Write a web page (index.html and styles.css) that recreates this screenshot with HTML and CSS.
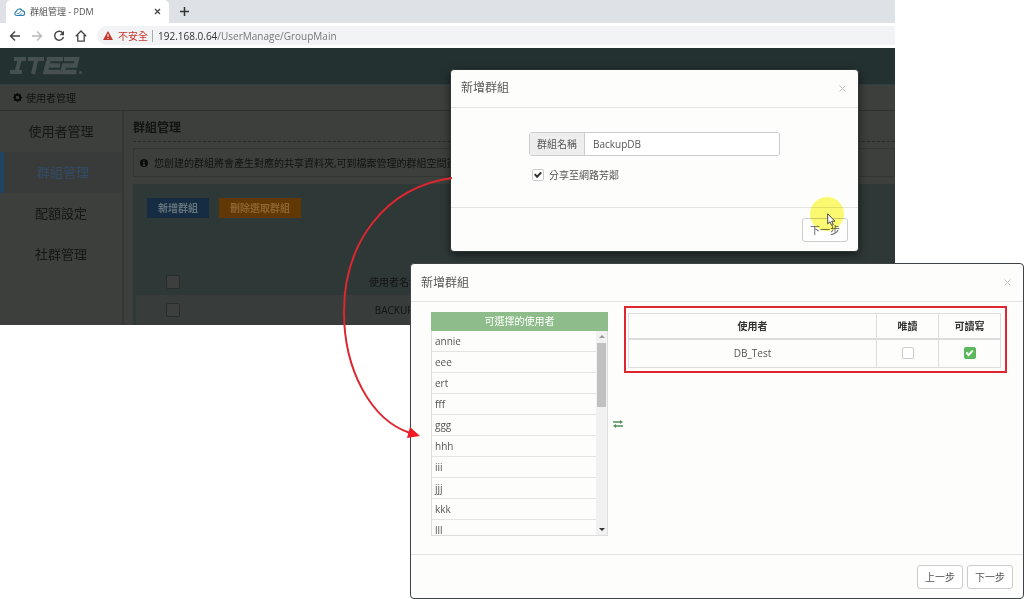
FILE: index.html
```html
<!DOCTYPE html>
<html lang="zh-Hant">
<head>
<meta charset="utf-8">
<title>群組管理 - PDM</title>
<link rel="stylesheet" href="styles.css">
</head>
<body>
<div class="stage">
  <section class="browser">
    <div class="tabstrip">
      <div class="tab">
        <svg class="favicon" viewBox="0 0 12 10"><path d="M3 8.800a2.300 2.300 0 0 1-.300-4.500A3.300 3.300 0 0 1 9 3.800a2.500 2.500 0 0 1 .300 5z" fill="none" stroke="#2b7fb0" stroke-width="1.300"/><path d="M3 6.800C5 7 6.800 6 7.300 4M5 8.500c2 0 3-.8 3.800-2" fill="none" stroke="#2b7fb0" stroke-width="1"/></svg>
        <span class="tab-title">群組管理 - PDM</span>
        <button class="plain" aria-label="關閉分頁"><svg width="7" height="7" viewBox="0 0 7 7"><path d="M1 1l5 5M6 1L1 6" stroke="#444" stroke-width="1.300"/></svg></button>
      </div>
      <button class="plain new-tab" aria-label="新分頁"><svg width="9" height="9" viewBox="0 0 9 9"><path d="M4.500 0v9M0 4.500h9" stroke="#333" stroke-width="1.500"/></svg></button>
    </div>
    <div class="toolbar">
      <button class="plain" aria-label="上一頁"><svg width="12" height="12" viewBox="0 0 12 12"><path d="M11 6H1.500M6 1.500L1.500 6 6 10.500" fill="none" stroke="#444" stroke-width="1.400"/></svg></button>
      <button class="plain" aria-label="下一頁"><svg width="12" height="12" viewBox="0 0 12 12"><path d="M1 6h9.500M6 1.500L10.500 6 6 10.500" fill="none" stroke="#b8b8b8" stroke-width="1.300"/></svg></button>
      <button class="plain" aria-label="重新載入"><svg width="12" height="12" viewBox="0 0 12 12"><path d="M10 3.300A4.500 4.500 0 1 0 10.500 7" fill="none" stroke="#444" stroke-width="1.400"/><path d="M11 .8v4.400H6.600z" fill="#444"/></svg></button>
      <button class="plain" aria-label="首頁"><svg width="12" height="12" viewBox="0 0 12 12"><path d="M.8 6.300L6 1l5.200 5.300M2.800 5v6.200h6.400V5" fill="none" stroke="#444" stroke-width="1.300"/></svg></button>
      <div class="address">
        <svg width="10" height="9" viewBox="0 0 10 9"><path d="M5 0l5 9H0z" fill="#c5372c"/><path d="M5 3v3M5 7v1" stroke="#fff" stroke-width="1"/></svg>
        <span class="insecure">不安全</span>
        <span class="url">192.168.0.64<span class="path">/UserManage/GroupMain</span></span>
      </div>
    </div>
    <header class="brand">
      <svg class="logo" role="img" aria-label="ITE2" viewBox="0 0 72 18"><g fill="none" stroke="#465050" stroke-width="4"><path d="M4 2h12M0 15h12M10 2L6.500 15M18 2h16M26.500 2L23 17" /><path d="M53 2H39l-3.500 13H50M38 8.500h12M54 2h13l-1.500 6.500H54L52.500 15h14" stroke-width="4.500"/></g><circle cx="70.500" cy="15.500" r="1.500" fill="#465050"/></svg>
    </header>
    <div class="crumb">
      <svg width="9" height="9" viewBox="0 0 10 10"><circle cx="5" cy="5" r="2.900" fill="none" stroke="#090a09" stroke-width="2"/><path d="M5 0v2M5 8v2M0 5h2M8 5h2M1.500 1.500l1.400 1.400M7.100 7.100l1.400 1.400M8.500 1.500L7.100 2.900M2.900 7.100L1.500 8.500" stroke="#090a09" stroke-width="1.800"/></svg>
      <span>使用者管理</span>
    </div>
    <div class="workspace">
      <nav class="side">
        <a href="#users">使用者管理</a>
        <a href="#groups" class="active">群組管理</a>
        <a href="#quota">配額設定</a>
        <a href="#social">社群管理</a>
      </nav>
      <main class="content">
        <h1>群組管理</h1>
        <p class="notice"><svg width="8" height="8" viewBox="0 0 8 8"><circle cx="4" cy="4" r="4" fill="#0b0c0b"/><path d="M4 1.200v1.300M3 3.500h1v2.800M2.900 6.300h2.300" stroke="#3d3f3c" stroke-width="1.200" fill="none"/></svg><span>您創建的群組將會產生對應的共享資料夾,可到檔案管理的群組空間畫面</span></p>
        <div class="panel">
          <div class="actions">
            <button class="add">新增群組</button>
            <button class="remove">刪除選取群組</button>
          </div>
          <table class="groups">
            <colgroup><col class="c-pick"><col class="c-name"><col></colgroup>
            <thead><tr><th><input type="checkbox" aria-label="全選"></th><th>使用者名稱</th><th></th></tr></thead>
            <tbody><tr><td><input type="checkbox" aria-label="BACKUP"></td><td>BACKUP</td><td></td></tr></tbody>
          </table>
        </div>
      </main>
    </div>
  </section>

  <section class="dialog dialog-name" role="dialog" aria-labelledby="t1">
    <header class="dialog-head"><h2 id="t1">新增群組</h2><button class="plain" aria-label="關閉"><svg width="7" height="7" viewBox="0 0 7 7"><path d="M.5 .5l6 6M6.500 .5l-6 6" stroke="#c4c6c4"/></svg></button></header>
    <div class="dialog-body name-form">
      <div class="field"><label for="gname">群組名稱</label><input id="gname" type="text" value="BackupDB"></div>
      <label class="share"><input type="checkbox" checked><span>分享至網路芳鄰</span></label>
    </div>
    <footer class="dialog-foot"><button class="btn">下一步</button></footer>
  </section>

  <section class="dialog dialog-users" role="dialog" aria-labelledby="t2">
    <header class="dialog-head"><h2 id="t2">新增群組</h2><button class="plain" aria-label="關閉"><svg width="7" height="7" viewBox="0 0 7 7"><path d="M.5 .5l6 6M6.500 .5l-6 6" stroke="#c4c6c4"/></svg></button></header>
    <div class="dialog-body picker">
      <div class="available">
        <h3>可選擇的使用者</h3>
        <div class="scroller">
          <ul><li>annie</li><li>eee</li><li>ert</li><li>fff</li><li>ggg</li><li>hhh</li><li>iii</li><li>jjj</li><li>kkk</li><li>lll</li></ul>
          <div class="bar"><span class="up"></span><span class="thumb"></span><span class="down"></span></div>
        </div>
      </div>
      <button class="plain swap" aria-label="交換"><svg width="10" height="8" viewBox="0 0 10 8"><path d="M0 2h7.500M2.500 6H10" stroke="#4f8f59" stroke-width="1.300"/><path d="M7 0l3 2-3 2zM3 4L0 6l3 2z" fill="#4f8f59"/></svg></button>
      <div class="callout">
        <table class="rights">
          <colgroup><col><col class="c-right"><col class="c-right"></colgroup>
          <thead><tr><th>使用者</th><th>唯讀</th><th>可讀寫</th></tr></thead>
          <tbody><tr><td>DB_Test</td><td><input type="checkbox" aria-label="唯讀"></td><td><input type="checkbox" class="green" checked aria-label="可讀寫"></td></tr></tbody>
        </table>
      </div>
    </div>
    <footer class="dialog-foot"><button class="btn">上一步</button><button class="btn">下一步</button></footer>
  </section>

  <svg class="arrow" width="120" height="270" viewBox="340 172 120 270"><path d="M452 178C385 187 344 243 344 312C344 370 371 420 410 433" fill="none" stroke="#dc2630" stroke-width="2"/><path d="M420 436l-13 2 3-11z" fill="#ee1c25"/></svg>
  <svg class="pointer" width="36" height="36" viewBox="0 0 36 36"><circle cx="18" cy="17" r="17" fill="#fcfa72"/></svg>
  <svg class="cursor" width="9" height="13" viewBox="0 0 9 13"><path d="M.7 .8v10l2.300-2 1.600 3.600 1.700-.8-1.600-3.400h3.200z" fill="#fff" stroke="#333" stroke-width=".9"/></svg>
</div>
</body>
</html>
```

FILE: styles.css
```css
* { box-sizing: border-box; }
body { margin: 0; background: #fff; color: #555; font: 10px/14px "Open Sans", "Noto Sans CJK TC", sans-serif; }
h1, h2, h3, p, ul { margin: 0; padding: 0; font-weight: 400; }
button, input { font: inherit; color: inherit; }
svg { display: block; flex: none; }
table { border-collapse: collapse; table-layout: fixed; width: 100%; }
.plain { border: 0; padding: 0; background: none; }
.stage { position: relative; min-height: 599px; overflow: hidden; }

.browser { margin-right: 129px; background: #3d3f3c; color: #121312; }
.tabstrip { display: flex; align-items: center; height: 23px; padding-left: 6px; background: #dee1e6; }
.tab { display: flex; align-items: center; align-self: stretch; gap: 5px; width: 163px; padding: 0 8px; border-radius: 5px 5px 0 0; background: #fff; color: #555; }
.favicon { width: 11px; height: 10px; }
.tab-title { flex: 1; font-size: 9px; }
.new-tab { margin-left: 11px; }
.toolbar { display: flex; align-items: center; gap: 10px; height: 25px; padding: 0 0 0 9px; background: #fff; }
.address { display: flex; flex: 1; align-items: center; gap: 5px; height: 19px; padding-left: 6px; border-radius: 10px 0 0 10px; background: #f1f3f4; }
.insecure { padding-right: 4px; border-right: 1px solid #aaa; color: #c5372c; line-height: 12px; }
.url { color: #333; }
.path { color: #777; }
.brand { height: 37px; padding: 9px 10px; border-bottom: 1px solid #2e4142; background: #233130; }
.logo { width: 72px; height: 18px; }
.crumb { display: flex; align-items: center; gap: 4px; height: 26px; padding-left: 13px; border-bottom: 1px solid #2f312f; }
.workspace { display: flex; height: 214px; }
.side { display: flex; flex-direction: column; width: 124px; border-right: 2px solid #353735; }
.side a { height: 41px; padding-right: 4px; border-left: 4px solid transparent; color: #151615; font-size: 13px; line-height: 41px; text-align: center; text-decoration: none; }
.side .active { padding-right: 0; border-color: #1f4464; background: #393b3a; color: #314c66; }
.content { flex: 1; min-width: 0; padding-left: 9px; }
.content h1 { height: 31px; border-bottom: 1px dashed #2a2c2a; font-size: 12px; font-weight: 700; line-height: 33px; }
.notice { display: flex; align-items: center; gap: 6px; height: 29px; margin: 6px 0 7px; padding-left: 6px; border: 1px solid #343634; white-space: nowrap; overflow: hidden; }
.panel { height: 141px; padding-left: 3px; background: #2e3837; overflow: hidden; }
.actions { display: flex; gap: 10px; height: 85px; padding: 14px 11px; align-items: flex-start; }
.actions button { height: 20px; padding: 0 11px; border: 0; font-weight: 700; line-height: 20px; }
.add { background: #152c43; color: #65737b; }
.remove { background: #613704; color: #8b6433; }
.groups th, .groups td { height: 26px; padding: 0; font-weight: 400; text-align: center; }
.groups td { height: 30px; background: #383c3b; }
.c-pick { width: 73px; }
.c-name { width: 370px; }

input[type="checkbox"] { display: block; width: 12px; height: 12px; margin: 0 auto; border: 1px solid #ccc; border-radius: 2px; background: #fff; appearance: none; }
.groups input[type="checkbox"] { width: 14px; height: 14px; border-color: #2b2d2d; background: #3d3f3f; }
input[type="checkbox"]:checked { display: grid; place-items: center; }
input[type="checkbox"]:checked::before { content: ""; width: 8px; height: 8px; background: #333; clip-path: polygon(0 48%, 18% 30%, 38% 52%, 82% 8%, 100% 26%, 38% 90%); }
input.green:checked { border-color: #5cb85c; background: #5cb85c; }
input.green:checked::before { background: #fff; }

.dialog { position: absolute; display: flex; flex-direction: column; border-radius: 4px; background: #fdfefc; }
.dialog-name { top: 69px; left: 450px; width: 409px; border: 1px solid #2b3433; box-shadow: 0 3px 8px rgba(0, 0, 0, .5); }
.dialog-users { top: 263px; right: 0; bottom: 0; left: 410px; padding-top: 1px; border: 1px solid #3d4244; }
.dialog-head { display: flex; align-items: center; justify-content: space-between; height: 38px; padding: 0 12px 1px 10px; border-bottom: 1px solid #e3e5e3; }
.dialog-head h2 { font-size: 12px; }
.dialog-foot { display: flex; justify-content: flex-end; gap: 4px; height: 44px; padding: 10px; border-top: 1px solid #e3e5e3; }
.btn { width: 46px; height: 24px; padding: 0; border: 1px solid #ccc; border-radius: 3px; background: #fff; }
.name-form { height: 99px; padding: 24px 78px; }
.field { display: flex; height: 24px; border: 1px solid #ccc; border-radius: 3px; overflow: hidden; }
.field label { padding: 0 7px; border-right: 1px solid #ccc; background: #eee; line-height: 22px; }
.field input { flex: 1; min-width: 0; padding: 0 8px; border: 0; background: #fff; }
.share { display: flex; align-items: center; gap: 5px; width: max-content; margin: 12px 3px; }

.picker { display: flex; flex: 1; align-items: flex-start; padding: 10px 16px 18px 20px; }
.available { align-self: stretch; display: flex; flex-direction: column; width: 177px; }
.available h3 { height: 19px; background: #8fbc8b; color: #fff; font-size: 10px; line-height: 19px; text-align: center; }
.scroller { display: flex; flex: 1; min-height: 0; border: 1px solid #ddd; border-top: 0; overflow: hidden; }
.available ul { flex: 1; height: 204px; list-style: none; overflow: hidden; }
.available li { height: 21px; padding-left: 3px; border-bottom: 1px solid #e3e5e3; line-height: 21px; }
.bar { display: flex; flex-direction: column; align-items: center; width: 11px; padding: 4px 0; background: #f1f1f1; }
.up, .down { border: 3px solid transparent; }
.up { border-top: 0; border-bottom-color: #999; }
.down { margin-top: auto; border-bottom: 0; border-top-color: #333; }
.thumb { width: 9px; height: 64px; margin-top: 5px; background: #c1c1c1; }
.swap { align-self: center; margin: 0 1px 0 5px; }
.callout { flex: 1; margin-top: -6px; padding: 5px 4px 3px 2px; border: 2px solid #df2630; }
.rights th, .rights td { padding: 0; border: 1px solid #ddd; text-align: center; }
.rights th { height: 25px; border-bottom-width: 2px; color: #333; font-weight: 700; }
.rights td { height: 29px; }
.c-right { width: 62px; }

.arrow { position: absolute; top: 172px; left: 340px; }
.pointer { position: absolute; top: 197px; left: 809px; mix-blend-mode: multiply; }
.cursor { position: absolute; top: 213px; left: 827px; }
```
